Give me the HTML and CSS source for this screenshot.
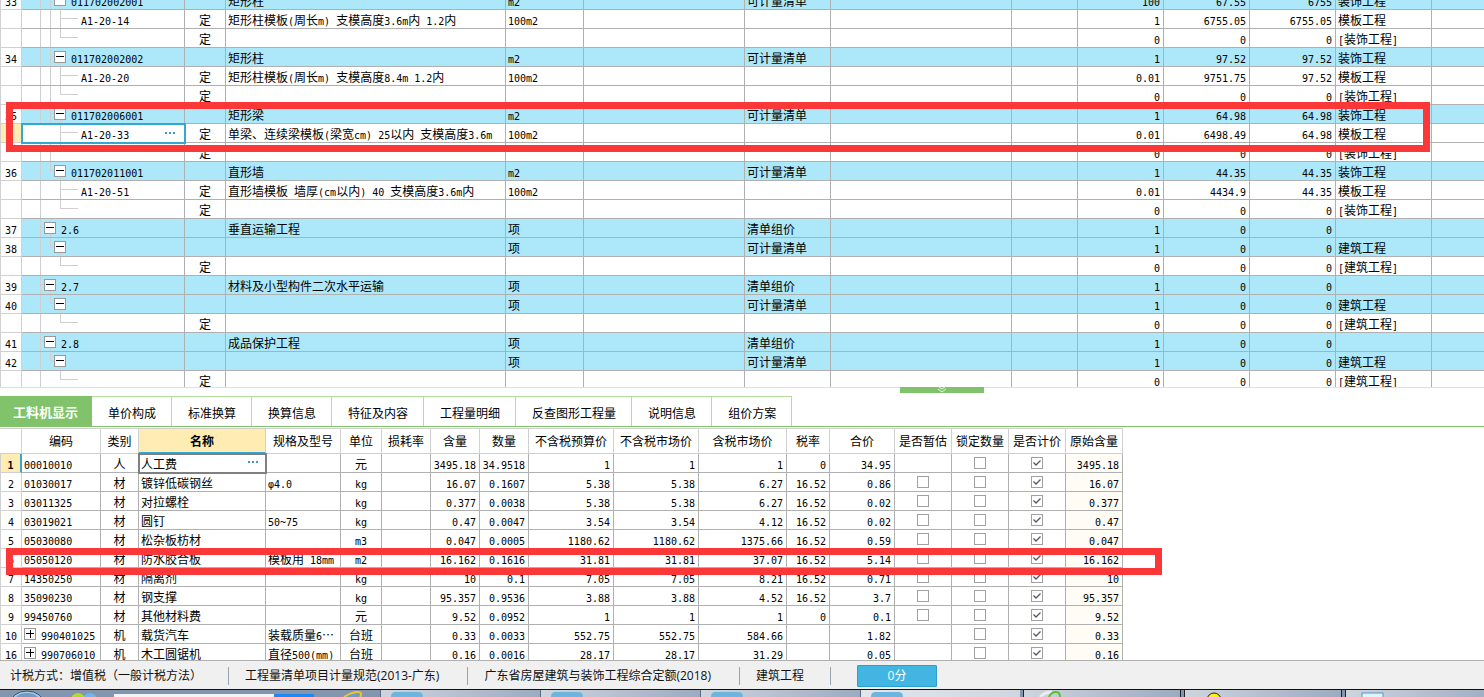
FILE: index.html
```html
<!DOCTYPE html>
<html lang="zh-CN">
<head>
<meta charset="utf-8">
<title>工程计价</title>
<link rel="stylesheet" href="styles.css">
</head>
<body>
<main class="pane items-pane">
  <div class="clip">
    <table class="grid items">
      <colgroup>
        <col class="w22"><col class="w163"><col class="w41"><col class="w280"><col class="w78"><col class="w161"><col class="w86"><col class="w181"><col class="w66"><col class="w86"><col class="w86"><col class="w86"><col class="w96"><col>
      </colgroup>
      <tbody id="items"></tbody>
    </table>
  </div>
  <button class="splitter" type="button" aria-label="收起">
    <svg width="10" height="6" viewBox="0 0 10 6"><path d="M2 0l3 2 3-2M1 2l4 3 4-3" fill="none" stroke="#e4f5dc"/></svg>
  </button>
  <div class="mark mark-items"></div>
</main>

<section class="pane detail-pane">
  <nav class="tabs">
    <button class="tab active" type="button">工料机显示</button>
    <button class="tab" type="button">单价构成</button>
    <button class="tab" type="button">标准换算</button>
    <button class="tab" type="button">换算信息</button>
    <button class="tab" type="button">特征及内容</button>
    <button class="tab" type="button">工程量明细</button>
    <button class="tab" type="button">反查图形工程量</button>
    <button class="tab" type="button">说明信息</button>
    <button class="tab" type="button">组价方案</button>
  </nav>
  <div class="clip">
    <table class="grid detail">
      <colgroup>
        <col class="w22"><col class="w79"><col class="w38"><col class="w127"><col class="w75"><col class="w41"><col class="w49"><col class="w49"><col class="w49"><col class="w85"><col class="w85"><col class="w88"><col class="w43"><col class="w65"><col class="w57"><col class="w57"><col class="w57"><col class="w57">
      </colgroup>
      <thead>
        <tr><th></th><th>编码</th><th>类别</th><th class="current">名称</th><th>规格及型号</th><th>单位</th><th>损耗率</th><th>含量</th><th>数量</th><th>不含税预算价</th><th>不含税市场价</th><th>含税市场价</th><th>税率</th><th>合价</th><th>是否暂估</th><th>锁定数量</th><th>是否计价</th><th>原始含量</th></tr>
      </thead>
      <tbody id="detail"></tbody>
    </table>
  </div>
  <div class="mark mark-detail"></div>
</section>

<footer class="status">
  <span class="status-item">计税方式：增值税（一般计税方法）</span>
  <span class="status-item">工程量清单项目计量规范(2013-广东)</span>
  <span class="status-item">广东省房屋建筑与装饰工程综合定额(2018)</span>
  <span class="status-item">建筑工程</span>
  <button class="score" type="button">0分</button>
</footer>

<div class="taskbar">
  <div class="pinned">
    <svg width="380" height="7" viewBox="0 0 380 7">
      <ellipse cx="27" cy="14" rx="17" ry="13" fill="#a9c6dc" stroke="#2f5578"/>
      <ellipse cx="27" cy="14" rx="14" ry="11" fill="#6f9cc0"/>
      <circle cx="78" cy="10" r="7" fill="#b5d829"/>
      <circle cx="90" cy="10" r="7" fill="#6fb6ea"/>
      <rect x="114" y="4" width="160" height="3" fill="#f1f3f6"/>
      <rect x="274" y="4" width="40" height="3" fill="#2088f5"/>
      <path d="M344 7q8-5 14-5q5 0 2 5" fill="none" stroke="#f1c32d" stroke-width="2"/>
      <path d="M348 7q5-3 9-1" fill="none" stroke="#49a8e6" stroke-width="2"/>
    </svg>
  </div>
  <div class="window"><i class="app"></i></div>
  <div class="window"><i class="app"></i></div>
  <div class="window"><i class="app"></i></div>
  <div class="window light"><i class="app"></i></div>
  <div class="window apart"><svg class="glyph" width="24" height="7" viewBox="0 0 24 7"><path d="M1 7q5-5 12-5" fill="none" stroke="#e8eef4" stroke-width="3"/><path d="M10 7q2-5 7-5q4 0 4 5" fill="none" stroke="#55c522" stroke-width="2"/></svg></div>
  <div class="window apart"><svg class="glyph" width="24" height="7" viewBox="0 0 24 7"><circle cx="14" cy="10" r="7" fill="#ffee10" stroke="#222"/></svg></div>
  <div class="window apart last"><svg class="glyph" width="24" height="7" viewBox="0 0 24 7"><rect x="1" y="3" width="21" height="8" fill="#e3f2fb" stroke="#4b9bcd"/></svg></div>
</div>
<script src="app.js"></script>
</body>
</html>
```

FILE: styles.css
```css
* { box-sizing: border-box; }

body {
  margin: 0;
  height: 100vh;
  display: grid;
  grid-template-rows: 388fr 273fr auto auto;
  background: #fff;
  color: #000;
  font: 12px/16px "Noto Sans CJK SC", sans-serif;
  overflow: hidden;
}

button { font: inherit; padding: 0; border: 0; background: none; }

.pane { position: relative; min-width: 0; min-height: 0; display: flex; flex-direction: column; }
.clip { flex: 1; min-height: 0; overflow: hidden; }
.items-pane { border-bottom: 1px solid #e0e0e0; }
.detail-pane { border-bottom: 1px solid #b0b0b0; padding-top: 8px; }

/* grids */
.grid { border-collapse: separate; border-spacing: 0; table-layout: fixed; }
.items { width: 100%; margin-top: -9px; }
.detail { width: 1123px; margin-top: 1px; }

.w22 { width: 22px; }
.w38 { width: 38px; }
.w41 { width: 41px; }
.w43 { width: 43px; }
.w49 { width: 49px; }
.w57 { width: 57px; }
.w65 { width: 65px; }
.w66 { width: 66px; }
.w75 { width: 75px; }
.w78 { width: 78px; }
.w79 { width: 79px; }
.w85 { width: 85px; }
.w86 { width: 86px; }
.w88 { width: 88px; }
.w96 { width: 96px; }
.w127 { width: 127px; }
.w161 { width: 161px; }
.w163 { width: 163px; }
.w181 { width: 181px; }
.w280 { width: 280px; }

.grid td {
  height: 19px;
  padding: 2px 2px 0;
  border-right: 1px solid #b0b0b0;
  border-bottom: 1px solid #b0b0b0;
  line-height: 16px;
  white-space: pre;
  overflow: hidden;
}
.grid td.num { padding-right: 3px; }
.items td:last-child { border-right: 0; }
.grid td.index {
  padding: 2px 0 0;
  text-align: center;
  border-left: 1px solid #d0d0d0;
  border-right-color: #d0d0d0;
  border-bottom-color: #d0d0d0;
  background: #fff;
}
.grid th {
  height: 26px;
  padding: 0;
  border: solid #d0d0d0;
  border-width: 1px 1px 1px 0;
  font-weight: 400;
  line-height: 16px;
  text-align: center;
  white-space: nowrap;
}
.grid th.current { background: #ffecb3; font-weight: 700; border-bottom: 2px solid #35a7d3; }
.latin { font-family: "DejaVu Sans Mono", monospace; font-size: 10px; line-height: 10px; }
.grid .num { text-align: right; }
.grid .mid { text-align: center; }
.bill td { background: #ade8fa; }
.grid td.index.on { background: #ffecb3; }
.detail td.index.on { font-weight: 700; border-right: 2px solid #35a7d3; }
.grid td.origin { background: #fffbf5; }
.grid td.box { padding: 0; text-align: center; line-height: 0; }

.grid td.code { padding: 0; }
.code-line { display: flex; align-items: center; height: 18px; }
.code-line svg { flex: none; }
.code-line .label { flex: 1; padding-top: 2px; }
.selected { outline: 2px solid #35a7d3; outline-offset: -1px; }
.editing { outline: 2px solid #808080; outline-offset: -1px; }
.name-line { display: flex; justify-content: space-between; }

.toggle {
  flex: none;
  width: 12px;
  height: 12px;
  margin-right: 5px;
  border: 1px solid #999;
  background: #fff;
  display: grid;
  place-items: center;
}
.guided { margin-left: -12px; }
.plus { margin-left: 2px; }
.more { width: 12px; height: 12px; margin-right: 8px; display: grid; place-items: center; }
.name-line .more { margin-right: 4px; }

.tick {
  appearance: none;
  width: 12px;
  height: 12px;
  margin: 0;
  border: 1px solid #a0a0a0;
  background: #fff;
}
.tick:checked {
  background: #fff url("data:image/svg+xml,%3Csvg xmlns='http://www.w3.org/2000/svg' viewBox='0 0 10 10'%3E%3Cpath d='M1.5 4.5L4 7l4.5-4.5' fill='none' stroke='%23556' stroke-width='1.3'/%3E%3C/svg%3E");
}

/* highlight frames over the grids */
.mark { position: absolute; left: 6px; border: 7px solid #fc3737; pointer-events: none; }
.mark-items { top: 102px; width: 1424px; height: 50px; }
.mark-detail { top: 160px; width: 1156px; height: 27px; }

.splitter {
  position: absolute;
  left: 900px;
  top: 387px;
  width: 84px;
  height: 6px;
  background: #80c36a;
  display: flex;
  justify-content: center;
  z-index: 1;
}

/* tabs */
.tabs { display: flex; border-bottom: 1px solid #80c36a; }
.tab {
  height: 30px;
  padding: 2px 15px 0 16px;
  border: solid #b4e09d;
  border-width: 1px 1px 0 0;
  white-space: nowrap;
}
.tab.active {
  padding: 0 13px;
  background: #80c36a;
  border-color: #80c36a;
  color: #fff;
  font-size: 13px;
  font-weight: 700;
}

/* status bar */
.status {
  height: 28px;
  padding-top: 1px;
  display: flex;
  align-items: center;
  background: #f0f0f0;
  color: #111;
  font-family: "Open Sans", "Noto Sans CJK SC", sans-serif;
  white-space: nowrap;
}
.status-item { height: 18px; line-height: 18px; padding: 0 28px 0 16px; border-right: 1px solid #9aa3b0; }
.status-item:first-child { padding: 0 26px 0 10px; }
.status-item:nth-child(4) { padding-right: 26px; }
.score {
  width: 80px;
  height: 22px;
  margin-left: 26px;
  background: #42b6e3;
  border: 1px solid #2e9fcc;
  border-radius: 1px;
  color: #fff;
}

/* taskbar */
.taskbar { height: 8px; display: flex; border-top: 1px solid #111; background: #8496ae; }
.pinned { flex: none; width: 380px; height: 7px; }
.pinned svg, .glyph { display: block; }
.window {
  flex: none;
  width: 160px;
  height: 7px;
  padding: 2px 0 0 10px;
  border: solid #5d6b7e;
  border-width: 0 0 0 1px;
  background: linear-gradient(90deg, #cdd5de, #9dabc0);
  overflow: hidden;
}
.window.light { background: linear-gradient(90deg, #e2e7ed, #cfd6df); }
.window.apart { width: 158px; margin-left: 3px; padding: 0 0 0 15px; border-color: #222; border-right-width: 1px; }
.window.last { flex: 1; }
.app { display: block; width: 32px; height: 9px; border-radius: 5px; background: #6bb5de; }
```

FILE: app.js
```js
const ARCH = '建筑工程', DECO = '装饰工程', TEMP = '模板工程';
const COUNT = '可计量清单', GROUP = '清单组价';

// [no, kind, code, name, unit, list type, qty, price, total, category]
const items = [
  ['33', 'bill', '011702002001', '矩形柱', 'm2', COUNT, '100', '67.55', '6755', DECO],
  ['', 'first', 'A1-20-14', '矩形柱模板(周长m) 支模高度3.6m内 1.2内', '100m2', '', '1', '6755.05', '6755.05', TEMP],
  ['', 'end', '', '', '', '', '0', '0', '0', `[${DECO}]`],
  ['34', 'bill', '011702002002', '矩形柱', 'm2', COUNT, '1', '97.52', '97.52', DECO],
  ['', 'first', 'A1-20-20', '矩形柱模板(周长m) 支模高度8.4m 1.2内', '100m2', '', '0.01', '9751.75', '97.52', TEMP],
  ['', 'end', '', '', '', '', '0', '0', '0', `[${DECO}]`],
  ['35', 'bill', '011702006001', '矩形梁', 'm2', COUNT, '1', '64.98', '64.98', DECO],
  ['', 'selected', 'A1-20-33', '单梁、连续梁模板(梁宽cm) 25以内 支模高度3.6m', '100m2', '', '0.01', '6498.49', '64.98', TEMP],
  ['', 'end', '', '', '', '', '0', '0', '0', `[${DECO}]`],
  ['36', 'billLast', '011702011001', '直形墙', 'm2', COUNT, '1', '44.35', '44.35', DECO],
  ['', 'firstLast', 'A1-20-51', '直形墙模板 墙厚(cm以内) 40 支模高度3.6m内', '100m2', '', '0.01', '4434.9', '44.35', TEMP],
  ['', 'endLast', '', '', '', '', '0', '0', '0', `[${DECO}]`],
  ['37', 'group', '2.6', '垂直运输工程', '项', GROUP, '1', '0', '0', ''],
  ['38', 'billLast', '', '', '项', COUNT, '1', '0', '0', ARCH],
  ['', 'endLast', '', '', '', '', '0', '0', '0', `[${ARCH}]`],
  ['39', 'group', '2.7', '材料及小型构件二次水平运输', '项', GROUP, '1', '0', '0', ''],
  ['40', 'billLast', '', '', '项', COUNT, '1', '0', '0', ARCH],
  ['', 'endLast', '', '', '', '', '0', '0', '0', `[${ARCH}]`],
  ['41', 'group', '2.8', '成品保护工程', '项', GROUP, '1', '0', '0', ''],
  ['42', 'billLast', '', '', '项', COUNT, '1', '0', '0', ARCH],
  ['', 'endLast', '', '', '', '', '0', '0', '0', `[${ARCH}]`],
];

// [no, code, type, name, spec, unit, loss, content, qty, budget, market, taxed, rate, total, provisional, original]
const detail = [
  ['1', '00010010', '人', '人工费', '', '元', '', '3495.18', '34.9518', '1', '1', '1', '0', '34.95', false, '3495.18'],
  ['2', '01030017', '材', '镀锌低碳钢丝', 'φ4.0', 'kg', '', '16.07', '0.1607', '5.38', '5.38', '6.27', '16.52', '0.86', true, '16.07'],
  ['3', '03011325', '材', '对拉螺栓', '', 'kg', '', '0.377', '0.0038', '5.38', '5.38', '6.27', '16.52', '0.02', true, '0.377'],
  ['4', '03019021', '材', '圆钉', '50~75', 'kg', '', '0.47', '0.0047', '3.54', '3.54', '4.12', '16.52', '0.02', true, '0.47'],
  ['5', '05030080', '材', '松杂板枋材', '', 'm3', '', '0.047', '0.0005', '1180.62', '1180.62', '1375.66', '16.52', '0.59', true, '0.047'],
  ['6', '05050120', '材', '防水胶合板', '模板用 18mm', 'm2', '', '16.162', '0.1616', '31.81', '31.81', '37.07', '16.52', '5.14', true, '16.162'],
  ['7', '14350250', '材', '隔离剂', '', 'kg', '', '10', '0.1', '7.05', '7.05', '8.21', '16.52', '0.71', true, '10'],
  ['8', '35090230', '材', '钢支撑', '', 'kg', '', '95.357', '0.9536', '3.88', '3.88', '4.52', '16.52', '3.7', true, '95.357'],
  ['9', '99450760', '材', '其他材料费', '', '元', '', '9.52', '0.0952', '1', '1', '1', '0', '0.1', true, '9.52'],
  ['10', '+990401025', '机', '载货汽车', '装载质量6…', '台班', '', '0.33', '0.0033', '552.75', '552.75', '584.66', '', '1.82', false, '0.33'],
  ['16', '+990706010', '机', '木工圆锯机', '直径500(mm)', '台班', '', '0.16', '0.0016', '28.17', '28.17', '31.29', '', '0.05', false, '0.16'],
];

// Latin runs take the half-width face, Chinese stays in the body face.
const text = s => s.replace(/[\x20-\x7eφ]+/g, run => `<span class="latin">${run}</span>`);
const cell = (s, cls = '') => `<td class="${cls}">${text(s)}</td>`;

// Guide lines of the tree, in rectangles [x, y, width, height]; width is where the label starts.
const guides = {
  bill:      { width: 44, lines: [[18, 0, 1, 18], [28, 0, 1, 18], [28, 8, 4, 1], [38, 14, 1, 4]] },
  billLast:  { width: 44, lines: [[18, 0, 1, 18], [28, 0, 1, 9], [28, 8, 4, 1], [38, 14, 1, 4]] },
  group:     { width: 34, lines: [[18, 0, 1, 18], [18, 8, 4, 1], [28, 14, 1, 4]] },
  first:     { width: 59, lines: [[18, 0, 1, 18], [28, 0, 1, 18], [38, 0, 1, 18], [38, 8, 18, 1]] },
  end:       { width: 59, lines: [[18, 0, 1, 18], [28, 0, 1, 18], [38, 0, 1, 9], [38, 8, 18, 1]] },
  firstLast: { width: 59, lines: [[18, 0, 1, 18], [38, 0, 1, 18], [38, 8, 18, 1]] },
  endLast:   { width: 59, lines: [[18, 0, 1, 18], [38, 0, 1, 9], [38, 8, 18, 1]] },
  selected:  { width: 59, lines: [[38, 0, 1, 18], [38, 8, 18, 1]] },
};

const toggle = (sign, cls) => `<button type="button" class="toggle ${cls}" aria-label="${sign === '+' ? '展开' : '折叠'}">` +
  `<svg width="10" height="10"><path d="M1 4.5h8${sign === '+' ? 'M5 1v8' : ''}" stroke="#000" fill="none" shape-rendering="crispEdges"/></svg></button>`;
const more = '<button type="button" class="more" aria-label="更多"><svg width="12" height="4"><path d="M1 1h2v2h-2zM5 1h2v2h-2zM9 1h2v2h-2z" fill="#3f95d0"/></svg></button>';

function tree(kind, code) {
  const g = guides[kind];
  const rects = g.lines.map(([x, y, w, h]) => `<rect x="${x}" y="${y}" width="${w}" height="${h}" fill="#cfcfcf"/>`).join('');
  const box = g.width < 50 ? toggle('-', 'guided') : '';
  return `<td class="code ${kind === 'selected' ? 'selected' : ''}"><div class="code-line"><svg width="${g.width}" height="18">${rects}</svg>` +
    `${box}<span class="label">${text(code)}</span>${kind === 'selected' ? more : ''}</div></td>`;
}

document.getElementById('items').innerHTML = items.map(([no, kind, code, name, unit, type, qty, price, total, cat]) => {
  const bill = guides[kind].width < 50;
  return `<tr class="${bill ? 'bill' : ''}">` + cell(no, 'index' + (kind === 'selected' ? ' on' : '')) + tree(kind, code) +
    cell(bill ? '' : '定', 'mid') + cell(name) + cell(unit) + cell('') + cell(type) + cell('') + cell('') +
    cell(qty, 'num') + cell(price, 'num') + cell(total, 'num') + cell(cat) + cell('') + '</tr>';
}).join('');

const tick = (label, on) => `<td class="box"><input type="checkbox" class="tick" aria-label="${label}"${on ? ' checked' : ''}></td>`;

document.getElementById('detail').innerHTML = detail.map((r, i) => {
  const code = r[1][0] === '+'
    ? `<td class="code"><div class="code-line">${toggle('+', 'plus')}<span class="label">${text(r[1].slice(1))}</span></div></td>`
    : cell(r[1]);
  const name = i === 0
    ? `<td class="editing"><div class="name-line"><span>${r[3]}</span>${more}</div></td>`
    : cell(r[3]);
  return '<tr>' + cell(r[0], 'index' + (i === 0 ? ' on' : '')) + code + cell(r[2], 'mid') + name + cell(r[4]) + cell(r[5], 'mid') +
    r.slice(6, 14).map(v => cell(v, 'num')).join('') +
    (r[14] ? tick('是否暂估', false) : cell('')) + tick('锁定数量', false) + tick('是否计价', true) + cell(r[15], 'num origin') + '</tr>';
}).join('');
```
